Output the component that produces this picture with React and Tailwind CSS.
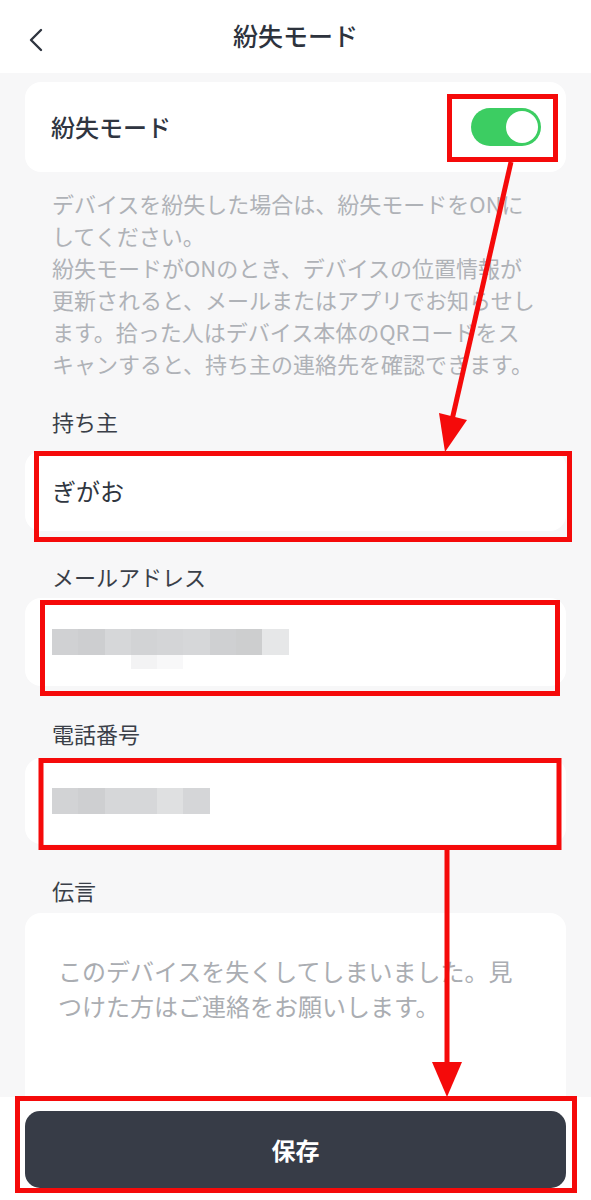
import React from "react";

const font = { fontFamily: '"Noto Sans CJK JP", "Noto Sans", sans-serif' };

// mosaic blocks hiding the private values
const emailBlocks = ["#d0d1d3", "#cdced0", "#d6d7d9", "#d2d3d5", "#d4d5d7", "#d6d7d9", "#cfd0d2", "#cdcecf", "#e6e7e8"];
const phoneBlocks = ["#d2d3d5", "#cecfd1", "#d6d7d9", "#d6d7d9", "#dfe0e1", "#d5d6d8"];

function Mosaic({ colors }) {
  return (
    <div className="flex h-[26px]">
      {colors.map((c, i) => (
        <div key={i} className="w-[26.3px] h-full" style={{ background: c }} />
      ))}
    </div>
  );
}

function Field({ label, top, children, height }) {
  return (
    <div className={top}>
      <div className="pl-[27px] text-[22px] leading-[32px] text-[#3a3f48]">{label}</div>
      <div className={`bg-white rounded-[16px] flex items-center pl-[28px] ${height}`}>{children}</div>
    </div>
  );
}

function Annotations() {
  return (
    <svg
      className="absolute inset-0 pointer-events-none"
      width="591"
      height="1200"
      viewBox="0 0 591 1200"
    >
      <g fill="none" stroke="#f50a0a" strokeWidth="5">
        <rect x="449.5" y="96.5" width="106" height="63" />
        <rect x="36.5" y="453.5" width="533" height="86" />
        <rect x="42.5" y="602.5" width="515" height="91" />
        <rect x="41" y="760.5" width="518" height="87" />
        <rect x="17.5" y="1098.5" width="557" height="92" />
        <line x1="511" y1="162" x2="452" y2="420" />
        <line x1="447" y1="850" x2="447" y2="1064" />
      </g>
      <g fill="#f50a0a">
        <polygon points="445,452 439,413 467,420" />
        <polygon points="447,1097 432,1062 462,1062" />
      </g>
    </svg>
  );
}

export default function App() {
  return (
    <div className="relative w-[591px] h-[1200px] overflow-hidden flex flex-col bg-white" style={font}>
      {/* header */}
      <div className="relative h-[73px] shrink-0 flex items-center justify-center bg-white">
        <svg className="absolute left-[26px] top-[27px]" width="20" height="26" viewBox="0 0 20 26">
          <path d="M15 3 L5 13 L15 23" fill="none" stroke="#2f3540" strokeWidth="2.4" strokeLinecap="round" strokeLinejoin="round" />
        </svg>
        <div className="text-[25px] font-medium text-[#2d333d] -mt-[2px]">紛失モード</div>
      </div>

      {/* body */}
      <div className="flex-1 overflow-hidden bg-[#f7f7f8] px-[25px] pt-[9px]">
        <div className="h-[90px] bg-white rounded-[16px] flex items-center justify-between pl-[26px] pr-[25px]">
          <span className="text-[24px] font-medium text-[#2f3540]">紛失モード</span>
          <div className="w-[70px] h-[38px] rounded-full bg-[#3ccd62] p-[3px] flex justify-end">
            <div className="w-[32px] h-[32px] rounded-full bg-white" />
          </div>
        </div>

        <div className="mt-[15px] pl-[27px] pr-[27px] text-[22px] leading-[32px] text-[#afb2b7]">
          <p>デバイスを紛失した場合は、紛失モードをONにしてください。</p>
          <p>紛失モードがONのとき、デバイスの位置情報が更新されると、メールまたはアプリでお知らせします。拾った人はデバイス本体のQRコードをスキャンすると、持ち主の連絡先を確認できます。</p>
        </div>

        <Field label="持ち主" top="mt-[26px]" height="h-[80px] mt-[14px]">
          <span className="text-[24px] text-[#303640] -ml-[1px]">ぎがお</span>
        </Field>

        <Field label="メールアドレス" top="mt-[29px]" height="h-[88px] mt-[6px]">
          <div className="relative -ml-[1px]">
            <Mosaic colors={emailBlocks} />
            <div className="absolute left-[79px] top-[26px] flex h-[14px]">
              <div className="w-[26px] bg-[#f3f3f4]" />
              <div className="w-[26px] bg-[#f8f8f9]" />
            </div>
          </div>
        </Field>

        <Field label="電話番号" top="mt-[31px]" height="h-[86px] mt-[9px]">
          <div className="-ml-[1px]">
            <Mosaic colors={phoneBlocks} />
          </div>
        </Field>

        <div className="mt-[30px]">
          <div className="pl-[27px] text-[22px] leading-[32px] text-[#3a3f48]">伝言</div>
          <div className="mt-[7px] h-[240px] bg-white rounded-[16px] pl-[33px] pr-[33px] pt-[40px] text-[24px] leading-[35px] text-[#aaadb2]">
            このデバイスを失くしてしまいました。見つけた方はご連絡をお願いします。
          </div>
        </div>
      </div>

      {/* footer */}
      <div className="h-[103px] shrink-0 bg-white px-[25px] pt-[14px]">
        <button className="w-full h-[77px] rounded-[15px] bg-[#373c47] text-white text-[24px] font-bold">
          保存
        </button>
      </div>

      <Annotations />
    </div>
  );
}
